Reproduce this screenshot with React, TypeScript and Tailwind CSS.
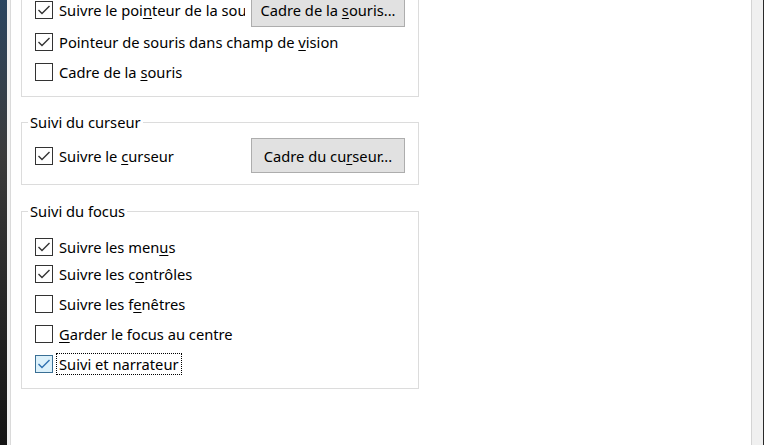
import type { ReactNode } from 'react';

const Key = ({ children }: { children: ReactNode }) => <span className="underline underline-offset-2">{children}</span>;

const Check = ({ checked, hover }: { checked?: boolean; hover?: boolean }) => (
  <span
    className={`flex h-[18px] w-[18px] shrink-0 items-center justify-center border ${
      hover ? 'border-[#3a6f94] bg-[#dcf1fb]' : 'border-[#333333] bg-white'
    }`}
  >
    {checked && (
      <svg width="16" height="16" viewBox="0 0 16 16">
        <polyline
          points="2.5,8 6,11.5 13.5,4"
          fill="none"
          stroke={hover ? '#2f70b0' : '#333333'}
          strokeWidth="1.4"
        />
      </svg>
    )}
  </span>
);

const Row = ({
  checked,
  hover,
  focus,
  className = 'h-[30px]',
  children,
}: {
  checked?: boolean;
  hover?: boolean;
  focus?: boolean;
  className?: string;
  children: ReactNode;
}) => (
  <div className={`flex items-center pl-[13px] ${className}`}>
    <Check checked={checked} hover={hover} />
    <span className={`ml-[3px] px-[2px] whitespace-nowrap ${focus ? 'border border-dotted border-black' : 'border border-transparent'}`}>
      {children}
    </span>
  </div>
);

const Button = ({ children }: { children: ReactNode }) => (
  <button className="h-[35px] w-[154px] shrink-0 border border-[#adadad] bg-[#e1e1e1] text-center text-black">
    {children}
  </button>
);

const Group = ({ title, className, children }: { title: string; className?: string; children: ReactNode }) => (
  <fieldset className={`w-[398px] border border-[#dcdcdc] ${className ?? ''}`}>
    <legend className="ml-[6px] px-[2px] leading-[20px]">{title}</legend>
    {children}
  </fieldset>
);

export default function App() {
  return (
    <div className="flex h-[445px] w-[764px] overflow-hidden bg-white text-[14.7px] leading-[20px] text-black [font-family:'Noto_Sans',sans-serif]">
      <div className="w-[7px] bg-linear-to-b from-[#2a4560] via-[#3a3a3a] via-35% to-[#141414]" />
      <div className="w-[3px] bg-[#f0f0f0]" />
      <div className="w-px bg-[#dadada]" />

      <main className="flex-1 overflow-hidden pl-[10px]">
        {/* contenu défilé : le haut du premier groupe est hors de la vue */}
        <div className="-mt-[34px] flex flex-col">
          <Group title="Suivi de la souris" className="pt-[6px] pb-[9px]">
            <div className="flex h-[35px] items-center">
              <div className="flex w-[229px] items-center pl-[13px]">
                <Check checked />
                <span className="ml-[6px] w-[186px] overflow-hidden whitespace-nowrap">
                  Suivre le poi<Key>n</Key>teur de la souris
                </span>
              </div>
              <Button>
                Cadre de la <Key>s</Key>ouris...
              </Button>
            </div>
            <Row checked>
              Pointeur de souris dans champ de <Key>v</Key>ision
            </Row>
            <Row>
              Cadre de la <Key>s</Key>ouris
            </Row>
          </Group>

          <Group title="Suivi du curseur" className="mt-[15px] pt-[6px] pb-[11px]">
            <div className="flex h-[35px] items-center">
              <div className="flex w-[229px] items-center pl-[13px]">
                <Check checked />
                <span className="ml-[6px] whitespace-nowrap">
                  Suivre le <Key>c</Key>urseur
                </span>
              </div>
              <Button>
                Cadre du cu<Key>r</Key>seur...
              </Button>
            </div>
          </Group>

          <Group title="Suivi du focus" className="mt-[16px] pt-[14px] pb-[9px]">
            <Row checked className="h-[24px]">
              Suivre les men<Key>u</Key>s
            </Row>
            <Row checked>
              Suivre les c<Key>o</Key>ntrôles
            </Row>
            <Row>
              Suivre les f<Key>e</Key>nêtres
            </Row>
            <Row>
              <Key>G</Key>arder le focus au centre
            </Row>
            <Row checked hover focus>
              Suivi et narrateur
            </Row>
          </Group>
        </div>
      </main>

      <div className="w-px bg-[#d4d4d4]" />
      <div className="w-[11px] bg-[#f0f0f0]" />
      <div className="w-px bg-[#2a2a2a]" />
    </div>
  );
}
